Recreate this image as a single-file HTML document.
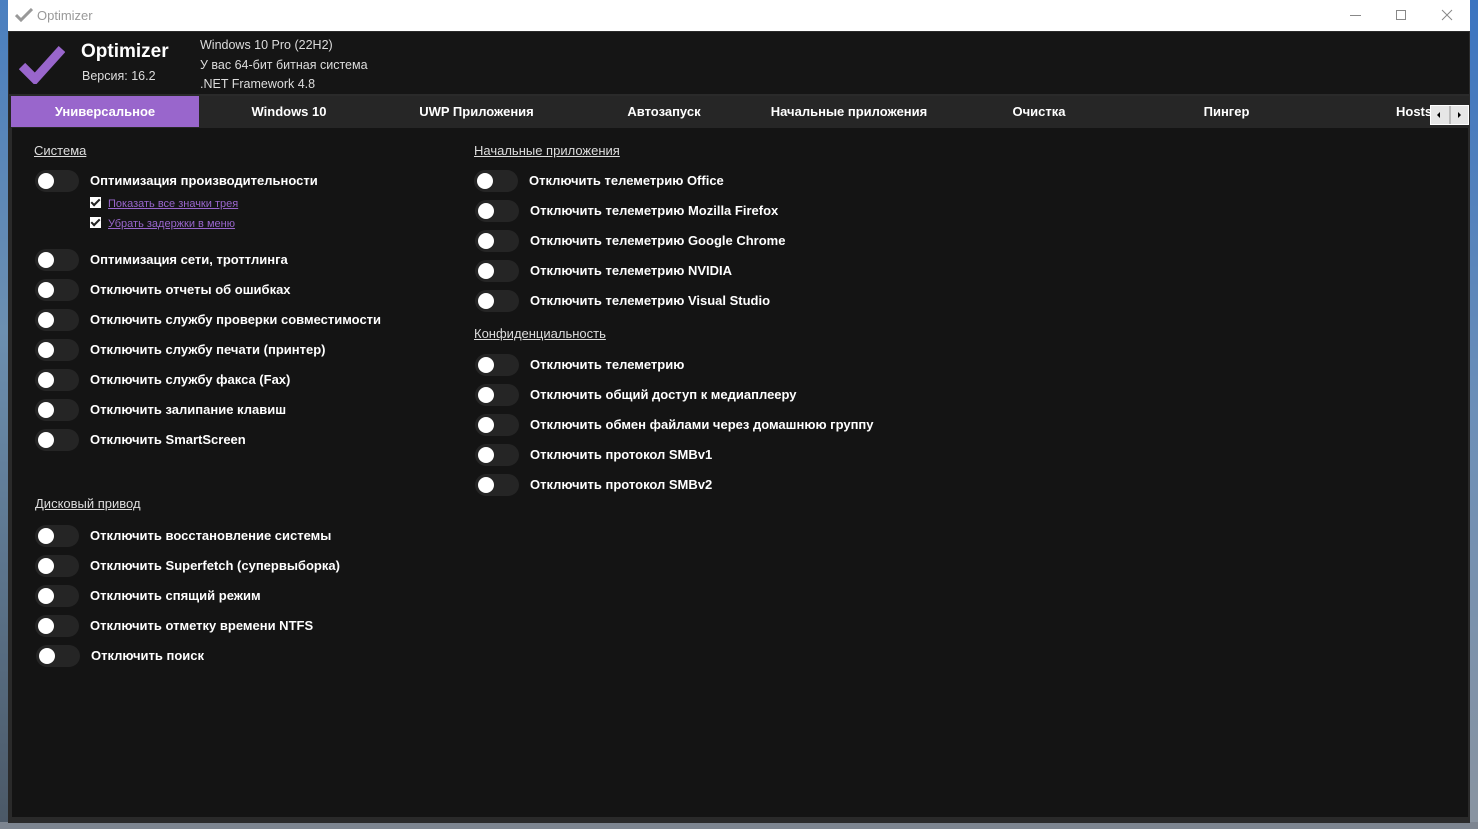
<!DOCTYPE html>
<html><head><meta charset="utf-8"><style>
*{margin:0;padding:0;box-sizing:border-box}
body{width:1478px;height:829px;overflow:hidden;background:#3b6fa8;font-family:"Segoe UI","Liberation Sans","DejaVu Sans",sans-serif;position:relative}
.desk{position:absolute;left:0;top:0;width:8px;height:829px;background:linear-gradient(#4a7fc0,#6c8fb0 40%,#4b5866)}
.deskr{position:absolute;right:0;top:0;width:8px;height:829px;background:linear-gradient(#3b74c0,#6c8fb8 50%,#8a94a0)}
.deskb{position:absolute;left:0;top:822px;width:1478px;height:7px;background:#7d8590}
.win{position:absolute;left:8px;top:0;width:1462px;height:823px;background:#2a2a2a}
.title{position:absolute;left:0;top:0;width:1462px;height:31px;background:#fff;color:#999;font-size:13px}
.title .t{position:absolute;left:29px;top:8px}
.hdr{position:absolute;left:1px;top:32px;width:1460px;height:62px;background:#151515}
.tabs{position:absolute;left:1px;top:96px;width:1460px;height:32px;background:#262626;color:#fff;font-size:13px;font-weight:bold}
.tab{position:absolute;top:0;height:31px;line-height:32px;text-align:center}
.content{position:absolute;left:4px;top:128px;width:1456px;height:689px;background:#141414}
.sec{position:absolute;color:#ddd;font-size:13px;text-decoration:underline;margin-top:1px}
.it{position:absolute;color:#fff;font-size:13px;font-weight:bold;height:22px}
.tg{position:absolute;left:0;top:0;width:44px;height:22px;border-radius:11px;background:#252525}
.tg:after{content:"";position:absolute;left:3px;top:3px;width:16px;height:16px;border-radius:50%;background:#fff}
.it span{position:absolute;left:55px;top:3px;white-space:nowrap}
.cb{position:absolute;font-size:11px;color:#9966cc;text-decoration:underline;white-space:nowrap;margin-top:1px}
.cb i{display:inline-block;width:11px;height:11px;background:#fff;margin-right:7px;vertical-align:-1px;position:relative}
.cb i:after{content:"";position:absolute;left:3px;top:0;width:3px;height:7px;border:solid #222;border-width:0 2px 2px 0;transform:rotate(45deg)}
</style></head><body>
<div class="desk"></div><div class="deskr"></div><div class="deskb"></div>
<div class="win">
<div class="title">
<svg style="position:absolute;left:7px;top:8px" width="18" height="14" viewBox="0 0 18 14"><path d="M1 7l5 5L17 1" stroke="#999" stroke-width="3" fill="none"/></svg>
<span class="t">Optimizer</span>
<div style="position:absolute;left:1342px;top:15px;width:11px;height:1px;background:#888"></div>
<div style="position:absolute;left:1388px;top:10px;width:10px;height:10px;border:1px solid #888"></div>
<svg style="position:absolute;left:1433px;top:9px" width="12" height="12"><path d="M1 1l10 10M11 1L1 11" stroke="#888" stroke-width="1"/></svg>
</div>
<div class="hdr">
<svg style="position:absolute;left:10px;top:12px" width="46" height="40" viewBox="0 0 46 40"><path d="M3 22l13 13L43 5" stroke="#9966cc" stroke-width="9" fill="none"/></svg>
<div style="position:absolute;left:72px;top:9px;color:#fff;font-size:19px;font-weight:bold">Optimizer</div>
<div style="position:absolute;left:73px;top:37px;color:#ddd;font-size:12.5px">Версия: 16.2</div>
<div style="position:absolute;left:191px;top:4px;color:#ddd;font-size:12.5px;line-height:19.5px">Windows 10 Pro (22H2)<br>У вас 64-бит битная система<br>.NET Framework 4.8</div>
</div>
<div class="tabs">
<div class="tab" style="left:2px;width:188px;background:#9966cc">Универсальное</div>
<div class="tab" style="left:190px;width:180px">Windows 10</div>
<div class="tab" style="left:370px;width:195px">UWP Приложения</div>
<div class="tab" style="left:565px;width:180px">Автозапуск</div>
<div class="tab" style="left:745px;width:190px">Начальные приложения</div>
<div class="tab" style="left:935px;width:190px">Очистка</div>
<div class="tab" style="left:1125px;width:185px">Пингер</div>
<div class="tab" style="left:1387px;width:40px;text-align:left">Hosts</div>
<div style="position:absolute;left:1421px;top:9px;width:39px;height:20px;background:#e6e6e6;border:1px solid #fff">
<div style="position:absolute;left:18px;top:0;width:2px;height:18px;background:#bbb"></div>
<div style="position:absolute;left:6px;top:6px;width:0;height:0;border-top:3px solid transparent;border-bottom:3px solid transparent;border-right:3px solid #000"></div>
<div style="position:absolute;left:27px;top:6px;width:0;height:0;border-top:3px solid transparent;border-bottom:3px solid transparent;border-left:3px solid #000"></div>
</div>
</div>
<div class="content">
<div class="sec" style="left:22px;top:14px">Система</div>
<div class="it" style="left:23px;top:42px"><div class="tg"></div><span>Оптимизация производительности</span></div>
<div class="cb" style="left:78px;top:68px"><i></i>Показать все значки трея</div>
<div class="cb" style="left:78px;top:88px"><i></i>Убрать задержки в меню</div>
<div class="it" style="left:23px;top:121px"><div class="tg"></div><span>Оптимизация сети, троттлинга</span></div>
<div class="it" style="left:23px;top:151px"><div class="tg"></div><span>Отключить отчеты об ошибках</span></div>
<div class="it" style="left:23px;top:181px"><div class="tg"></div><span>Отключить службу проверки совместимости</span></div>
<div class="it" style="left:23px;top:211px"><div class="tg"></div><span>Отключить службу печати (принтер)</span></div>
<div class="it" style="left:23px;top:241px"><div class="tg"></div><span>Отключить службу факса (Fax)</span></div>
<div class="it" style="left:23px;top:271px"><div class="tg"></div><span>Отключить залипание клавиш</span></div>
<div class="it" style="left:23px;top:301px"><div class="tg"></div><span>Отключить SmartScreen</span></div>
<div class="sec" style="left:23px;top:367px">Дисковый привод</div>
<div class="it" style="left:23px;top:397px"><div class="tg"></div><span>Отключить восстановление системы</span></div>
<div class="it" style="left:23px;top:427px"><div class="tg"></div><span>Отключить Superfetch (супервыборка)</span></div>
<div class="it" style="left:23px;top:457px"><div class="tg"></div><span>Отключить спящий режим</span></div>
<div class="it" style="left:23px;top:487px"><div class="tg"></div><span>Отключить отметку времени NTFS</span></div>
<div class="it" style="left:24px;top:517px"><div class="tg"></div><span>Отключить поиск</span></div>
<div class="sec" style="left:462px;top:14px">Начальные приложения</div>
<div class="it" style="left:462px;top:42px"><div class="tg"></div><span>Отключить телеметрию Office</span></div>
<div class="it" style="left:463px;top:72px"><div class="tg"></div><span>Отключить телеметрию Mozilla Firefox</span></div>
<div class="it" style="left:463px;top:102px"><div class="tg"></div><span>Отключить телеметрию Google Chrome</span></div>
<div class="it" style="left:463px;top:132px"><div class="tg"></div><span>Отключить телеметрию NVIDIA</span></div>
<div class="it" style="left:463px;top:162px"><div class="tg"></div><span>Отключить телеметрию Visual Studio</span></div>
<div class="sec" style="left:462px;top:197px">Конфиденциальность</div>
<div class="it" style="left:463px;top:226px"><div class="tg"></div><span>Отключить телеметрию</span></div>
<div class="it" style="left:463px;top:256px"><div class="tg"></div><span>Отключить общий доступ к медиаплееру</span></div>
<div class="it" style="left:463px;top:286px"><div class="tg"></div><span>Отключить обмен файлами через домашнюю группу</span></div>
<div class="it" style="left:463px;top:316px"><div class="tg"></div><span>Отключить протокол SMBv1</span></div>
<div class="it" style="left:463px;top:346px"><div class="tg"></div><span>Отключить протокол SMBv2</span></div>
</div>
</div>
</body></html>
